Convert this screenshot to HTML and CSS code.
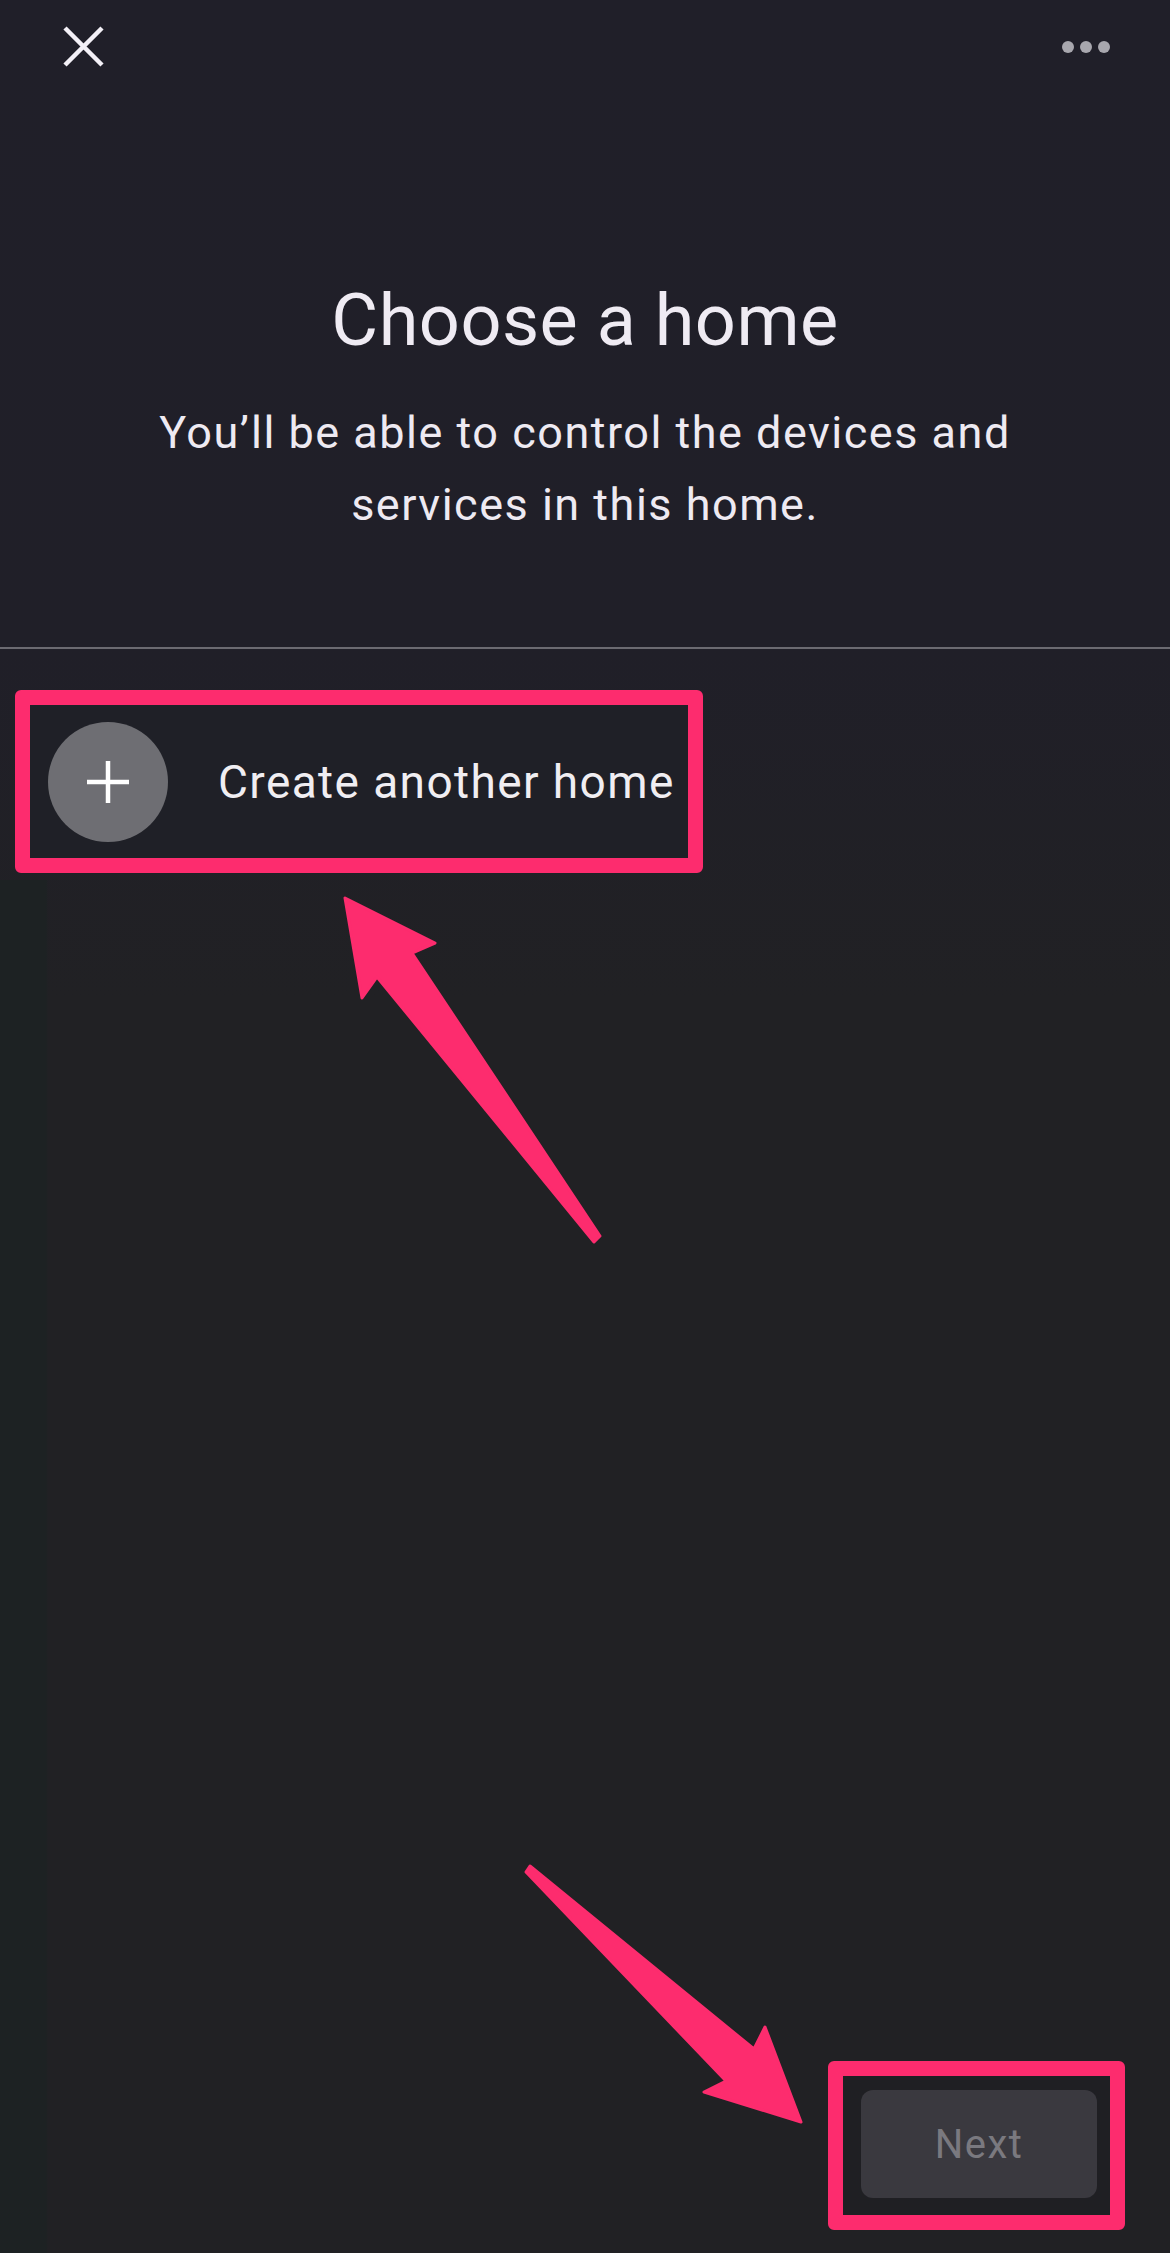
FILE: index.html
```html
<!DOCTYPE html>
<html lang="en">

<head>
  <meta charset="UTF-8" />
  <meta name="viewport" content="width=device-width, initial-scale=1.0" />
  <title>Choose a home</title>
  <link rel="stylesheet" href="styles.css">
</head>

<body>
  <div class="screen">
    <header class="top-bar">
      <button class="icon-btn close-btn" aria-label="Close">
        <svg viewBox="0 0 41 41" width="41" height="41">
          <path d="M2 2 L39 39 M39 2 L2 39" stroke="#f3f0f7" stroke-width="4.5" fill="none" />
        </svg>
      </button>
      <button class="icon-btn more-btn" aria-label="More options">
        <span class="dot"></span><span class="dot"></span><span class="dot"></span>
      </button>
    </header>

    <div class="intro">
      <h1>Choose a home</h1>
      <p>You’ll be able to control the devices and<br>services in this home.</p>
    </div>

    <hr class="divider">

    <div class="home-list">
      <div class="home-row marked">
        <span class="add-circle">
          <svg viewBox="0 0 44 44" width="44" height="44">
            <path d="M22 1 V43 M1 22 H43" stroke="#fff" stroke-width="4.5" fill="none" />
          </svg>
        </span>
        <span class="home-label">Create another home</span>
      </div>
    </div>

    <div class="spacer"></div>

    <footer class="bottom-bar">
      <div class="marked next-wrap">
        <button class="next-btn" disabled>Next</button>
      </div>
    </footer>

    <!-- annotation arrows drawn over the screenshot -->
    <svg class="arrows" viewBox="0 0 1170 2253" width="1170" height="2253">
      <polygon points="345,898 435,943 412,953 600,1236 594,1242 377,977 362,998"
        fill="#fd2c6e" stroke="#fd2c6e" stroke-width="3" stroke-linejoin="round" />
      <polygon points="530,1866 754,2049 765,2027 801,2122 704,2092 726,2081 526,1872"
        fill="#fd2c6e" stroke="#fd2c6e" stroke-width="3" stroke-linejoin="round" />
    </svg>
  </div>
</body>

</html>
```

FILE: styles.css
```css
* {
  box-sizing: border-box;
}

html,
body {
  margin: 0;
  padding: 0;
}

body {
  font-family: Roboto, "Noto Sans", sans-serif;
  background: #212124;
  color: #eeeaf2;
}

.screen {
  position: relative;
  height: 100vh;
  display: flex;
  flex-direction: column;
  background:
    linear-gradient(to right, #1d2223 0, #1d2223 46px, transparent 48px) 0 880px / 100% 100% no-repeat,
    linear-gradient(to bottom, #201f29 0, #201f28 650px, #212124 1000px, #212124 100%);
  overflow: hidden;
}

.top-bar {
  display: flex;
  justify-content: space-between;
  align-items: flex-start;
  padding: 26px 60px 0 63px;
}

.icon-btn {
  background: none;
  border: none;
  padding: 0;
  cursor: pointer;
}

.close-btn svg {
  display: block;
}

.more-btn {
  display: flex;
  gap: 6px;
  margin-top: 15px;
}

.dot {
  width: 12px;
  height: 12px;
  border-radius: 50%;
  background: #a8a7ae;
}

.intro {
  margin-top: 212px;
  text-align: center;
}

.intro h1 {
  margin: 0;
  font-size: 72px;
  line-height: 84px;
  font-weight: 400;
  letter-spacing: 0.5px;
  color: #efebf3;
}

.intro p {
  margin: 34px 0 0;
  font-size: 45px;
  line-height: 72px;
  letter-spacing: 1.5px;
  color: #eeeaf2;
}

.divider {
  margin: 106px 0 0;
  border: none;
  border-top: 2px solid #6b6a71;
}

.home-list {
  padding: 41px 0 0 15px;
}

.marked {
  border: 15px solid #fd2c6e;
  border-radius: 6px;
}

.home-row {
  display: inline-flex;
  align-items: center;
  padding: 17px 13px 16px 18px;
  background: #1f2027;
}

.add-circle {
  width: 120px;
  height: 120px;
  border-radius: 50%;
  background: #6e6e73;
  display: flex;
  align-items: center;
  justify-content: center;
}

.add-circle svg {
  display: block;
}

.home-label {
  margin-left: 50px;
  font-size: 46px;
  letter-spacing: 1.4px;
  color: #f0eef2;
}

.spacer {
  flex: 1;
}

.bottom-bar {
  display: flex;
  justify-content: flex-end;
  padding: 0 45px 23px 0;
}

.next-wrap {
  padding: 14px 13px 17px 18px;
  background: #1f1f23;
}

.next-btn {
  width: 236px;
  height: 108px;
  border: none;
  border-radius: 12px;
  background: #3a393f;
  color: #7a797f;
  font-family: Roboto, "Noto Sans", sans-serif;
  font-size: 40px;
  letter-spacing: 1.5px;
  display: block;
}

.arrows {
  position: absolute;
  left: 0;
  top: 0;
  pointer-events: none;
}
```
